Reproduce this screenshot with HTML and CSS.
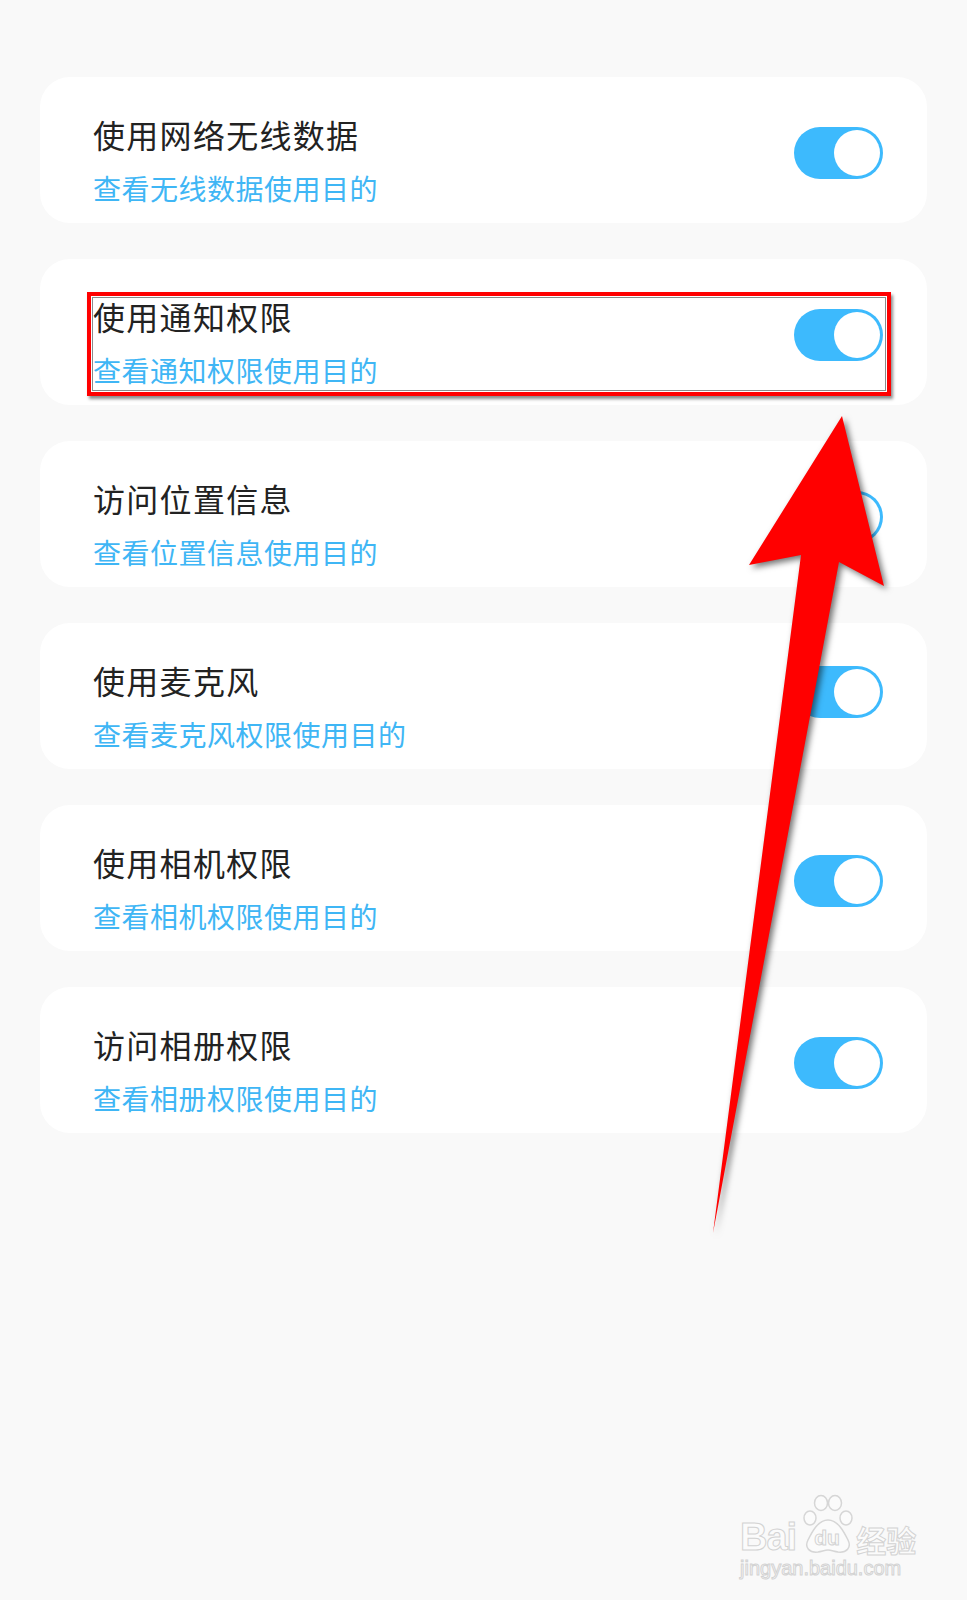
FILE: index.html
```html
<!DOCTYPE html>
<html lang="zh-CN">
  <head>
    <meta charset="UTF-8" />
    <meta name="viewport" content="width=device-width, initial-scale=1.0" />
    <title>权限管理</title>
    <link rel="stylesheet" href="styles.css">
  </head>
  <body>
    <div class="page">
      <div class="item">
        <div class="text">
          <div class="title">使用网络无线数据</div>
          <div class="sub">查看无线数据使用目的</div>
        </div>
        <div class="switch"><span class="knob"></span></div>
      </div>

      <div class="item">
        <div class="text">
          <div class="title">使用通知权限</div>
          <div class="sub">查看通知权限使用目的</div>
        </div>
        <div class="switch"><span class="knob"></span></div>
        <div class="mark"></div>
      </div>

      <div class="item">
        <div class="text">
          <div class="title">访问位置信息</div>
          <div class="sub">查看位置信息使用目的</div>
        </div>
        <div class="switch"><span class="knob"></span></div>
      </div>

      <div class="item">
        <div class="text">
          <div class="title">使用麦克风</div>
          <div class="sub">查看麦克风权限使用目的</div>
        </div>
        <div class="switch high"><span class="knob"></span></div>
      </div>

      <div class="item">
        <div class="text">
          <div class="title">使用相机权限</div>
          <div class="sub">查看相机权限使用目的</div>
        </div>
        <div class="switch"><span class="knob"></span></div>
      </div>

      <div class="item">
        <div class="text">
          <div class="title">访问相册权限</div>
          <div class="sub">查看相册权限使用目的</div>
        </div>
        <div class="switch"><span class="knob"></span></div>
      </div>
    </div>

    <!-- red arrow drawn over the list -->
    <svg class="arrow" width="967" height="1600" viewBox="0 0 967 1600">
      <polygon
        points="842,416 884,586 839,562 713,1233 801,555 749,565"
        fill="#ff0000"
      />
    </svg>

    <div class="watermark">
      <div class="logo">
        <span class="bai">Bai</span>
        <span class="paw">
          <svg width="52" height="60" viewBox="0 0 52 60">
            <g fill="#fbfbfb" stroke="#d6d6d6" stroke-width="1.5">
              <ellipse cx="8" cy="24" rx="6" ry="7" />
              <ellipse cx="19" cy="9" rx="6.5" ry="7.5" />
              <ellipse cx="33" cy="9" rx="6.5" ry="7.5" />
              <ellipse cx="44" cy="24" rx="6" ry="7" />
              <path d="M26 26 C16 26 10 38 6 46 C2 54 8 59 16 58 C21 57 23 56 26 56 C29 56 31 57 36 58 C44 59 50 54 46 46 C42 38 36 26 26 26 Z" />
            </g>
          </svg>
          <span class="du">du</span>
        </span>
        <span class="jy">经验</span>
      </div>
      <div class="url">jingyan.baidu.com</div>
    </div>
  </body>
</html>
```

FILE: styles.css
```css
body {
  margin: 0;
  background-color: #f9f9f9;
  font-family: "Noto Sans CJK SC", "Noto Sans", sans-serif;
  position: relative;
  width: 967px;
  height: 1600px;
  overflow: hidden;
}
.page {
  padding: 77px 40px 0 40px;
  display: flex;
  flex-direction: column;
  gap: 36px;
}
.item {
  position: relative;
  height: 146px;
  box-sizing: border-box;
  background-color: #fff;
  border-radius: 30px;
  padding: 37px 44px 0 53px;
  display: flex;
  justify-content: space-between;
  align-items: flex-start;
}
.title {
  font-size: 32px;
  line-height: 40px;
  letter-spacing: 1.3px;
  color: #222;
}
.sub {
  margin-top: 16px;
  font-size: 28px;
  line-height: 36px;
  letter-spacing: 0.5px;
  color: #3fb6f5;
}
.switch {
  margin-top: 13px;
  width: 89px;
  height: 52px;
  box-sizing: border-box;
  padding: 0 3px;
  border-radius: 26px;
  background-color: #3dbafd;
  display: flex;
  justify-content: flex-end;
  align-items: center;
}
.switch.high {
  margin-top: 6px;
}
.knob {
  width: 46px;
  height: 46px;
  border-radius: 50%;
  background-color: #fff;
}
.mark {
  position: absolute;
  left: 47px;
  top: 33px;
  width: 804px;
  height: 104px;
  box-sizing: border-box;
  border: 4px solid #ff0000;
  box-shadow: inset 0 0 0 1px #fff, inset 0 0 0 2px #8a8a8a,
    2px 3px 3px rgba(0, 0, 0, 0.45);
}
.arrow {
  position: absolute;
  left: 0;
  top: 0;
  pointer-events: none;
  filter: drop-shadow(3px 3px 3px rgba(0, 0, 0, 0.55));
}
.watermark {
  position: absolute;
  left: 740px;
  top: 1494px;
  width: 180px;
  color: #fbfbfb;
  -webkit-text-stroke: 1px #d3d3d3;
}
.logo {
  display: flex;
  align-items: flex-end;
  height: 60px;
}
.bai {
  font-family: "Liberation Sans", Arial, sans-serif;
  font-weight: bold;
  font-size: 38px;
  line-height: 37px;
  letter-spacing: -1px;
  margin-bottom: -2px;
}
.paw {
  position: relative;
  width: 52px;
  height: 60px;
  margin-left: 6px;
}
.paw svg {
  display: block;
}
.du {
  position: absolute;
  left: 12px;
  top: 33px;
  font-family: "Liberation Sans", Arial, sans-serif;
  font-weight: bold;
  font-size: 21px;
  line-height: 21px;
}
.jy {
  font-size: 30px;
  line-height: 34px;
  font-weight: bold;
  margin-left: 2px;
  margin-bottom: -2px;
}
.url {
  font-family: "Liberation Sans", Arial, sans-serif;
  font-size: 20px;
  line-height: 24px;
  margin-top: 2px;
}
```
